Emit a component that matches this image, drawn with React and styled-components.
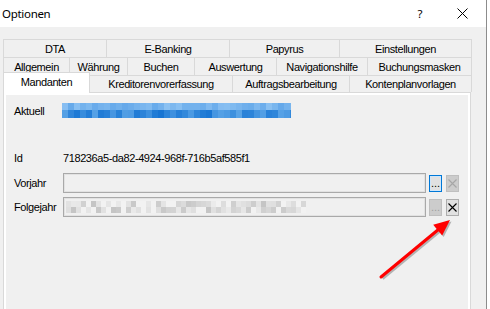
import React from 'react';
import styled, { createGlobalStyle } from 'styled-components';

const GlobalStyle = createGlobalStyle`
  html, body { margin: 0; padding: 0; background: #fff; }
  body { font-family: "Liberation Sans", Arial, sans-serif; font-size: 11px; color: #000; }
  #root { width: 490px; height: 309px; overflow: hidden; }
`;

const Window = styled.div`
  position: relative;
  width: 486px;
  height: 309px;
  border-right: 1px solid #8c8c8c;
  display: flex;
  flex-direction: column;
  background: #f0f0f0;
`;

const TitleBar = styled.div`
  height: 27px;
  flex: none;
  background: #fff;
  display: flex;
  align-items: center;
  padding-left: 2px;
  font-family: "Noto Sans", "Open Sans", sans-serif;
  font-size: 11.5px;
`;

const Title = styled.div`
  flex: 1;
  letter-spacing: -0.3px;
`;

const TitleButton = styled.div`
  width: 28px;
  height: 27px;
  display: flex;
  align-items: center;
  justify-content: center;
  margin-right: ${p => p.$mr || 0}px;
`;

const Body = styled.div`
  flex: 1;
  display: flex;
  flex-direction: column;
  padding: 12px 0 0 3px;
  min-height: 0;
`;

const TabRow = styled.div`
  display: flex;
  align-items: flex-end;
  height: ${p => p.$h}px;
  margin-top: ${p => p.$mt || 0}px;
  position: relative;
  z-index: ${p => p.$z || 0};
`;

const Tab = styled.div`
  box-sizing: border-box;
  width: ${p => p.$w}px;
  height: ${p => (p.$h ? `${p.$h}px` : '100%')};
  border-top: 1px solid #d9d9d9;
  border-right: 1px solid #d9d9d9;
  border-left: ${p => (p.$first ? '1px solid #d9d9d9' : 'none')};
  background: #f0f0f0;
  display: flex;
  align-items: center;
  justify-content: center;
  letter-spacing: -0.4px;
  white-space: nowrap;
`;

const ActiveTab = styled(Tab)`
  background: #fff;
  height: 21px;
  margin-bottom: -1px;
  padding-bottom: 3px;
  position: relative;
  z-index: 2;
`;

const Panel = styled.div`
  box-sizing: border-box;
  width: 468px;
  flex: 1;
  border: 1px solid #d9d9d9;
  border-bottom: none;
  background: #fff;
  padding: 2px 2px 0 2px;
  display: flex;
  position: relative;
  z-index: 1;
`;

const Page = styled.div`
  flex: 1;
  background: #f0f0f0;
  padding: 8px 0 0 8px;
  display: flex;
  flex-direction: column;
`;

const FieldRow = styled.div`
  display: flex;
  align-items: center;
  height: ${p => p.$h}px;
  margin-top: ${p => p.$mt || 0}px;
`;

const Label = styled.div`
  width: 49px;
  flex: none;
  letter-spacing: -0.4px;
`;

const Value = styled.div`
  letter-spacing: -0.4px;
`;

const BlurBar = styled.svg`
  display: block;
  margin-left: -1px;
`;

const TextBox = styled.div`
  box-sizing: border-box;
  width: 363px;
  height: 20px;
  border: 1px solid #a9a9a9;
  box-shadow: inset 1px 1px 0 #e2e2e2, inset -1px -1px 0 #e2e2e2;
  background: #f0f0f0;
  display: flex;
  align-items: center;
  padding-left: 1px;
`;

const SmallButton = styled.div`
  box-sizing: border-box;
  width: 13px;
  height: 17px;
  margin-left: ${p => p.$ml}px;
  display: flex;
  align-items: flex-end;
  justify-content: center;
  border: 1px solid ${p => (p.$focus ? '#0078d7' : p.$disabled ? '#bfbfbf' : '#adadad')};
  box-shadow: ${p => (p.$focus ? 'inset 0 0 0 1px #cfe6fa' : 'none')};
  background: ${p => (p.$disabled ? '#cccccc' : '#e1e1e1')};
  color: ${p => (p.$disabled ? '#a0a0a0' : '#000')};
  font-size: 11px;
  line-height: 11px;
  padding-bottom: 2px;
`;

const CrossButton = styled(SmallButton)`
  align-items: center;
  padding-bottom: 0;
`;

const Overlay = styled.svg`
  position: absolute;
  left: 0;
  top: 0;
  pointer-events: none;
  z-index: 5;
`;

function rng(seed) {
  let s = seed;
  return () => {
    s = (s * 9301 + 49297) % 233280;
    return s / 233280;
  };
}

const blueCells = (() => {
  const r = rng(17);
  const cells = [];
  const cw = 6;
  for (let x = 0; x < 229; x += cw) {
    for (let row = 0; row < 2; row++) {
      const v = r();
      let c;
      if (row === 0) {
        const l = 0.55 + v * 0.35;
        c = `rgb(${Math.round(40 + 110 * l)},${Math.round(130 + 70 * l)},${Math.round(220 + 25 * l)})`;
      } else {
        const l = v * 0.7;
        c = `rgb(${Math.round(20 + 100 * l)},${Math.round(115 + 70 * l)},${Math.round(210 + 30 * l)})`;
      }
      cells.push({ x, y: row === 0 ? 0 : 7, w: cw, h: row === 0 ? 7 : 8, c });
    }
  }
  return cells;
})();

const grayCells = (() => {
  const r = rng(91);
  const cells = [];
  const cw = 5;
  for (let x = 0; x < 240; x += cw) {
    for (let row = 0; row < 2; row++) {
      const v = r();
      const g = v < 0.3 ? 242 : Math.round(180 + v * 55);
      cells.push({ x, y: row * 6, w: cw, h: 6, c: `rgb(${g},${g},${g})` });
    }
  }
  return cells;
})();

const Pixelated = ({ cells, w, h }) => (
  <BlurBar width={w} height={h} shapeRendering="crispEdges">
    {cells.map((c, i) => (
      <rect key={i} x={c.x} y={c.y} width={c.w} height={c.h} fill={c.c} />
    ))}
  </BlurBar>
);

const GrayBlur = styled.svg`
  display: block;
  margin-left: 1px;
`;

const Cross = ({ color = '#000', size = 9 }) => (
  <svg width={size} height={size} viewBox="0 0 9 9">
    <path d="M0.5 0.5 L8.5 8.5 M8.5 0.5 L0.5 8.5" stroke={color} strokeWidth="1.1" fill="none" />
  </svg>
);

const row1 = [
  ['DTA', 104], ['E-Banking', 123], ['Papyrus', 110], ['Einstellungen', 132],
];
const row2 = [
  ['Allgemein', 67], ['Währung', 58], ['Buchen', 67], ['Auswertung', 82],
  ['Navigationshilfe', 91], ['Buchungsmasken', 104],
];
const row3 = [
  ['Kreditorenvorerfassung', 143], ['Auftragsbearbeitung', 117], ['Kontenplanvorlagen', 122],
];

export default function App() {
  return (
    <>
      <GlobalStyle />
      <Window>
        <TitleBar>
          <Title>Optionen</Title>
          <TitleButton $mr={14}>?</TitleButton>
          <TitleButton $mr={10}>
            <svg width="11" height="11" viewBox="0 0 11 11">
              <path d="M0.5 0.5 L10.5 10.5 M10.5 0.5 L0.5 10.5" stroke="#000" strokeWidth="1" fill="none" />
            </svg>
          </TitleButton>
        </TitleBar>
        <Body>
          <TabRow $h={18}>
            {row1.map(([t, w], i) => (
              <Tab key={t} $w={w} $first={i === 0}>{t}</Tab>
            ))}
          </TabRow>
          <TabRow $h={18}>
            {row2.map(([t, w], i) => (
              <Tab key={t} $w={w} $first={i === 0}>{t}</Tab>
            ))}
          </TabRow>
          <TabRow $h={20} $mt={-3} $z={2}>
            <ActiveTab $w={87} $first>Mandanten</ActiveTab>
            {row3.map(([t, w]) => (
              <Tab key={t} $w={w} $h={17}>{t}</Tab>
            ))}
          </TabRow>
          <Panel>
            <Page>
              <FieldRow $h={15}>
                <Label>Aktuell</Label>
                <Pixelated cells={blueCells} w={229} h={15} />
              </FieldRow>
              <FieldRow $h={14} $mt={33}>
                <Label>Id</Label>
                <Value>718236a5-da82-4924-968f-716b5af585f1</Value>
              </FieldRow>
              <FieldRow $h={20} $mt={8}>
                <Label>Vorjahr</Label>
                <TextBox />
                <SmallButton $ml={3} $focus>...</SmallButton>
                <CrossButton $ml={4} $disabled>
                  <Cross color="#a6a6a6" />
                </CrossButton>
              </FieldRow>
              <FieldRow $h={20} $mt={4}>
                <Label>Folgejahr</Label>
                <TextBox>
                  <GrayBlur width={240} height={12} shapeRendering="crispEdges">
                    {grayCells.map((c, i) => (
                      <rect key={i} x={c.x} y={c.y} width={c.w} height={c.h} fill={c.c} />
                    ))}
                  </GrayBlur>
                </TextBox>
                <SmallButton $ml={3} $disabled>...</SmallButton>
                <CrossButton $ml={4}>
                  <Cross />
                </CrossButton>
              </FieldRow>
            </Page>
          </Panel>
        </Body>
        <Overlay width="490" height="309">
          <g opacity="0.25" transform="translate(1.5,1.5)">
            <line x1="381" y1="277" x2="439" y2="229" stroke="#000" strokeWidth="3" />
            <polygon points="450,220 442.2,235.6 433.2,224.8" fill="#000" />
          </g>
          <line x1="381" y1="277" x2="439" y2="229" stroke="#ff0000" strokeWidth="3" strokeLinecap="round" />
          <polygon points="450,220 442.2,235.6 433.2,224.8" fill="#ff0000" />
        </Overlay>
      </Window>
    </>
  );
}
